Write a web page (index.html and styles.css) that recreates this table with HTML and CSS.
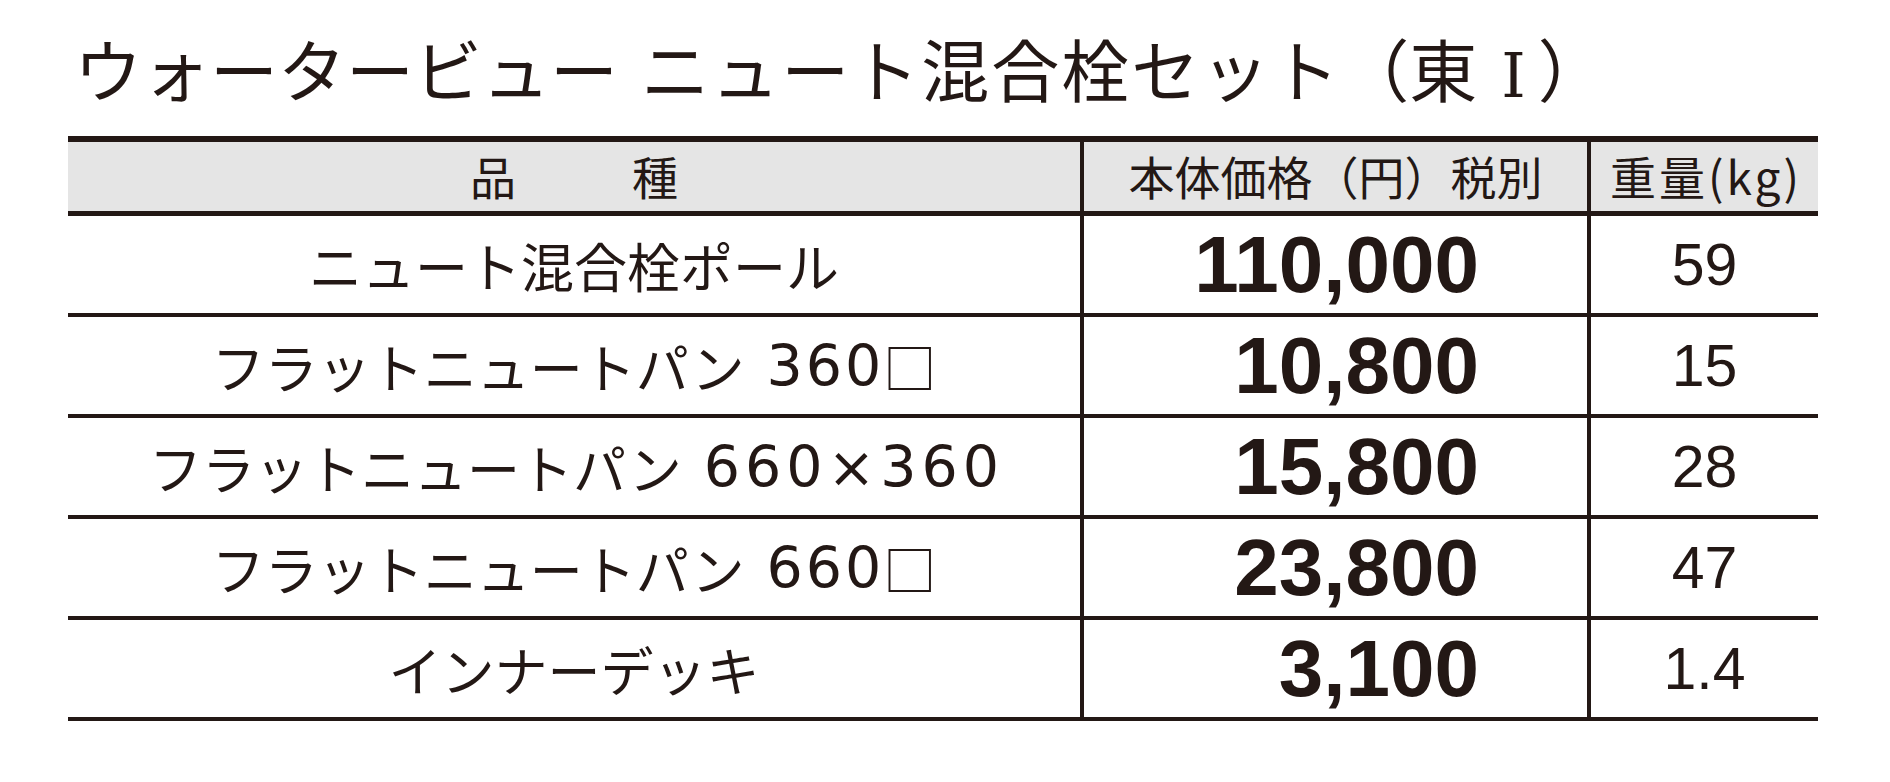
FILE: index.html
```html
<!DOCTYPE html>
<html lang="ja">
<head>
<meta charset="utf-8">
<title>ウォータービュー ニュート混合栓セット（東Ⅰ）</title>
<link rel="stylesheet" href="styles.css">
</head>
<body>
<div class="page">
  <h1 class="title"><span class="t1">ウォータービュー</span> <span class="t2">ニュート混合栓セット</span><span class="t3">（東<span class="roman">Ⅰ</span>）</span></h1>
  <div class="table">
    <div class="row head">
      <div class="cell c1"><span class="hname">品　　種</span></div>
      <div class="cell c2">本体価格（円）税別</div>
      <div class="cell c3"><span class="hw">重量(kg)</span></div>
    </div>
    <div class="row">
      <div class="cell c1">ニュート混合栓ポール</div>
      <div class="cell c2 price">110,000</div>
      <div class="cell c3">59</div>
    </div>
    <div class="row">
      <div class="cell c1">フラットニュートパン<span class="num">360</span><span class="sq">□</span></div>
      <div class="cell c2 price">10,800</div>
      <div class="cell c3">15</div>
    </div>
    <div class="row">
      <div class="cell c1">フラットニュートパン<span class="num wide">660×360</span></div>
      <div class="cell c2 price">15,800</div>
      <div class="cell c3">28</div>
    </div>
    <div class="row">
      <div class="cell c1">フラットニュートパン<span class="num">660</span><span class="sq">□</span></div>
      <div class="cell c2 price">23,800</div>
      <div class="cell c3">47</div>
    </div>
    <div class="row">
      <div class="cell c1">インナーデッキ</div>
      <div class="cell c2 price">3,100</div>
      <div class="cell c3">1.4</div>
    </div>
  </div>
</div>
</body>
</html>
```
FILE: styles.css
```css
html, body {
  margin: 0;
  padding: 0;
  background: #ffffff;
}
body {
  color: #231815;
  font-family: "Liberation Sans", "Noto Sans CJK JP", sans-serif;
}
.page {
  padding: 0 72px 0 68px;
  width: 1750px;
}
.title {
  margin: 0;
  padding: 34px 0 0 6px;
  height: 68px;
  margin-bottom: 34px;
  font-family: "Noto Sans CJK JP", sans-serif;
  font-weight: 400;
  font-size: 68px;
  line-height: 68px;
  white-space: nowrap;
}
.t1 {
  margin-right: 8px;
}
.t2 {
  letter-spacing: 2px;
}
.roman {
  font-family: "DejaVu Serif", "Noto Sans CJK JP", serif;
  font-size: 62px;
  margin: 0 12px 0 24px;
}
.table {
  border-top: 6px solid #231815;
}
.row {
  display: grid;
  grid-template-columns: 1012px 507px 231px;
  height: 97px;
  border-bottom: 4px solid #231815;
}
.row.head {
  height: 69px;
  border-bottom-width: 5px;
  background: #e5e5e5;
}
.cell {
  display: flex;
  align-items: center;
  justify-content: center;
  white-space: nowrap;
  font-family: "Noto Sans CJK JP", sans-serif;
  font-size: 53px;
}
.c2, .c3 {
  border-left: 4px solid #231815;
}
.head .cell {
  font-size: 46px;
  padding-bottom: 3px;
}
.hname {
  letter-spacing: 8px;
  padding-left: 8px;
}
.hw {
  letter-spacing: 3px;
  padding-left: 3px;
}
.num {
  font-family: "DejaVu Sans", sans-serif;
  font-size: 57px;
  letter-spacing: 3px;
  margin-left: 22px;
  margin-right: -1px;
}
.num.wide {
  letter-spacing: 5px;
  margin-right: -5px;
}
.sq {
  font-family: "Noto Sans CJK JP", sans-serif;
  font-size: 53px;
}
.price {
  justify-content: flex-end;
  padding-right: 108px;
  font-family: "Liberation Sans", sans-serif;
  font-weight: 700;
  font-size: 80px;
}
.row .c3 {
  font-family: "Liberation Sans", sans-serif;
  font-size: 59px;
}
.head .c3 {
  font-family: "Noto Sans CJK JP", sans-serif;
  font-size: 46px;
}
```
